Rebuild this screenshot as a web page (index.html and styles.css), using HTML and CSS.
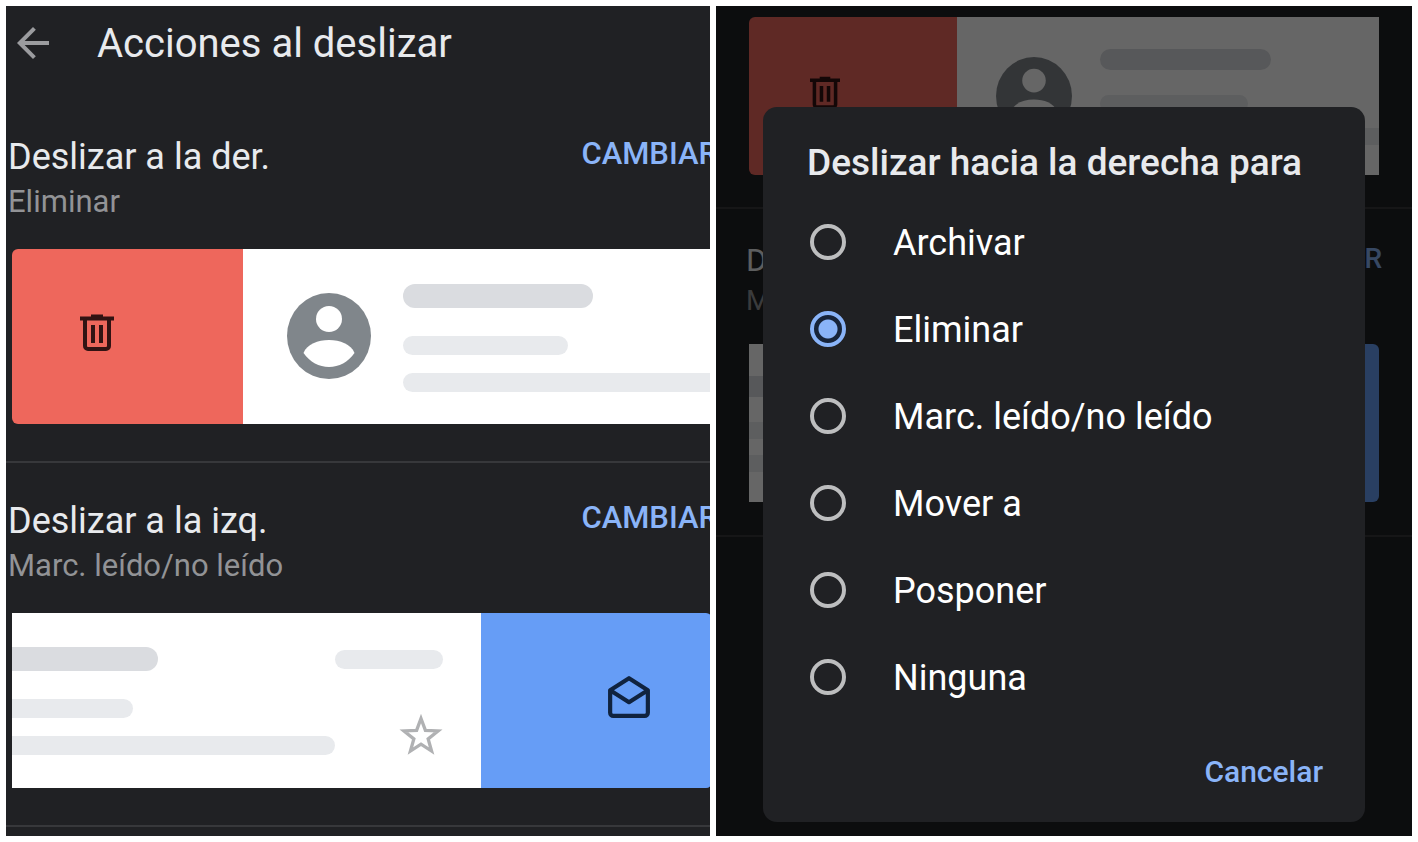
FILE: index.html
```html
<!DOCTYPE html>
<html lang="es">
<head>
<meta charset="UTF-8">
<meta name="viewport" content="width=device-width, initial-scale=1">
<title>Acciones al deslizar</title>
<link rel="stylesheet" href="styles.css">
</head>
<body>

<!-- shared icons -->
<svg class="sprite" aria-hidden="true">
  <symbol id="trash" viewBox="0 0 34 38">
    <path d="M0 4.500h34M11 2.500h12" fill="none" stroke="currentColor" stroke-width="4"/>
    <path d="M5 5v27a3 3 0 0 0 3 3h18a3 3 0 0 0 3-3V5" fill="none" stroke="currentColor" stroke-width="4"/>
    <path d="M13 11v18M21 11v18" fill="none" stroke="currentColor" stroke-width="4"/>
  </symbol>
  <symbol id="avatar" viewBox="0 0 84 86">
    <ellipse cx="42" cy="43" rx="42" ry="43" fill="currentColor"/>
    <circle cx="42" cy="26" r="13" fill="#fff"/>
    <path d="M16.500 60C20 51 31 47 42 47s22 4 25.500 13C61 69 52 74 42 74s-19-5-25.500-14z" fill="#fff"/>
  </symbol>
  <symbol id="mail" viewBox="0 0 42 42">
    <path d="M21 3L3 14.500V36a3 3 0 0 0 3 3h30a3 3 0 0 0 3-3V14.500zM3 14.500L21 26l18-11.500" fill="none" stroke="currentColor" stroke-width="4" stroke-linejoin="round"/>
  </symbol>
</svg>

<div class="screens">

  <main class="screen">
    <header class="topbar">
      <button class="back" type="button" aria-label="Atrás">
        <svg viewBox="0 0 24 24"><path d="M20 11H7.830l5.590-5.590L12 4l-8 8 8 8 1.410-1.410L7.830 13H20z" fill="currentColor"/></svg>
      </button>
      <h1>Acciones al deslizar</h1>
    </header>

    <section class="swipe">
      <div class="swipe-head">
        <div>
          <h2>Deslizar a la der.</h2>
          <p>Eliminar</p>
        </div>
        <button class="change" type="button">CAMBIAR</button>
      </div>
      <div class="card">
        <div class="action delete"><svg><use href="#trash"/></svg></div>
        <div class="mail right">
          <svg class="avatar"><use href="#avatar"/></svg>
          <div class="lines"><i class="line name"></i><i class="line subject"></i><i class="line body"></i></div>
        </div>
      </div>
    </section>

    <section class="swipe">
      <div class="swipe-head">
        <div>
          <h2>Deslizar a la izq.</h2>
          <p>Marc. leído/no leído</p>
        </div>
        <button class="change" type="button">CAMBIAR</button>
      </div>
      <div class="card">
        <div class="mail left">
          <div class="lines"><i class="line name"></i><i class="line subject"></i><i class="line body"></i></div>
          <div class="meta">
            <i class="line date"></i>
            <svg class="star" viewBox="0 0 40 40"><path d="M20 5l4 10.800 11.500.500-9 7.200 3.100 11.100L20 28.300l-9.600 6.300 3.100-11.100-9-7.200 11.500-.500z" fill="none" stroke="currentColor" stroke-width="3"/></svg>
          </div>
        </div>
        <div class="action unread"><svg><use href="#mail"/></svg></div>
      </div>
    </section>
  </main>

  <div class="screen dimmed">
    <div class="behind" aria-hidden="true">
      <section class="swipe first">
        <div class="card">
          <div class="action delete"><svg><use href="#trash"/></svg></div>
          <div class="mail right">
            <svg class="avatar"><use href="#avatar"/></svg>
            <div class="lines"><i class="line name"></i><i class="line subject"></i><i class="line body"></i></div>
          </div>
        </div>
      </section>
      <section class="swipe">
        <div class="swipe-head">
          <div>
            <h2>Deslizar a la izq.</h2>
            <p>Marc. leído/no leído</p>
          </div>
          <button class="change" type="button" tabindex="-1">CAMBIAR</button>
        </div>
        <div class="card">
          <div class="mail left">
            <div class="lines"><i class="line name"></i><i class="line subject"></i><i class="line body"></i></div>
          </div>
          <div class="action unread"></div>
        </div>
      </section>
    </div>

    <div class="scrim">
      <form class="dialog" role="dialog" aria-labelledby="dialog-title">
        <h2 id="dialog-title">Deslizar hacia la derecha para</h2>
        <label class="option"><input type="radio" name="accion" value="archivar">Archivar</label>
        <label class="option"><input type="radio" name="accion" value="eliminar" checked>Eliminar</label>
        <label class="option"><input type="radio" name="accion" value="leido">Marc. leído/no leído</label>
        <label class="option"><input type="radio" name="accion" value="mover">Mover a</label>
        <label class="option"><input type="radio" name="accion" value="posponer">Posponer</label>
        <label class="option"><input type="radio" name="accion" value="ninguna">Ninguna</label>
        <button class="cancel" type="button">Cancelar</button>
      </form>
    </div>
  </div>

</div>
</body>
</html>
```
FILE: styles.css
```css
* {
  box-sizing: border-box;
}
body {
  margin: 0;
  padding: 6px;
  background: #fff;
  font-family: Roboto, "Liberation Sans", sans-serif;
}
h1, h2, p {
  margin: 0;
  font-weight: 400;
  white-space: nowrap;
}
button {
  padding: 0;
  border: 0;
  background: none;
  font-family: inherit;
  cursor: pointer;
}
svg {
  display: block;
  flex: none;
}
.sprite {
  position: absolute;
  width: 0;
  height: 0;
}

.screens {
  display: grid;
  grid-template-columns: 704fr 696fr;
  gap: 6px;
  min-height: calc(100vh - 12px);
}
.screen {
  min-width: 0;
  overflow: hidden;
  background: #202124;
  color: #e8eaed;
}

/* top bar */
.topbar {
  display: flex;
  align-items: center;
  gap: 40px;
  height: 74px;
  padding-left: 3px;
  margin-bottom: 19px;
}
.back {
  color: #9b9c9f;
}
.back svg {
  width: 48px;
  height: 48px;
}
.topbar h1 {
  font-size: 40px;
}

/* swipe settings */
.swipe {
  padding: 34px 0 37px;
  border-bottom: 2px solid #37383b;
}
.swipe-head {
  display: flex;
  justify-content: space-between;
  align-items: flex-start;
  margin: 0 -8px 26px 2px;
}
.swipe-head h2 {
  font-size: 36px;
  line-height: 48px;
}
.swipe-head p {
  font-size: 31px;
  line-height: 42px;
  color: #929396;
}
.change {
  font-size: 31px;
  line-height: 42px;
  font-weight: 500;
  color: #8ab4f8;
}
.card {
  display: flex;
  height: 175px;
  margin: 0 -2px 0 6px;
}
.action {
  width: 33%;
  display: flex;
  align-items: center;
  padding-bottom: 8px;
}
.delete {
  padding-left: 68px;
  border-radius: 6px 0 0 6px;
  background: #ee675c;
  color: #311313;
}
.delete svg {
  width: 34px;
  height: 38px;
}
.unread {
  padding-left: 126px;
  border-radius: 0 6px 6px 0;
  background: #669df6;
  color: #10233f;
}
.unread svg {
  width: 44px;
  height: 44px;
}
.mail {
  flex: 1;
  display: flex;
  background: #fff;
}
.mail.right {
  padding-left: 44px;
  gap: 32px;
}
.avatar {
  width: 84px;
  height: 86px;
  margin-top: 44px;
  color: #80868b;
}

/* placeholder lines */
.lines {
  flex: 1;
  padding-top: 35px;
}
.line {
  display: block;
  height: 19px;
  border-radius: 10px;
  background: #e8eaed;
}
.line.name {
  width: 190px;
  height: 24px;
  border-radius: 12px;
  margin-bottom: 28px;
  background: #dadce0;
}
.line.subject {
  width: 165px;
  margin-bottom: 18px;
}
.right .body {
  border-radius: 10px 0 0 10px;
}
.left .lines {
  padding-top: 34px;
}
.left .line {
  border-radius: 0 12px 12px 0;
}
.left .name {
  width: 146px;
}
.left .subject {
  width: 121px;
}
.left .body {
  width: 323px;
}
.meta {
  display: flex;
  flex-direction: column;
  align-items: flex-end;
  gap: 44px;
  padding: 37px 38px 0 0;
}
.left .date {
  width: 108px;
  border-radius: 10px;
}
.star {
  width: 44px;
  height: 44px;
  color: #b0b1b3;
}

/* second screen, a little smaller and behind the dialog */
.dimmed {
  position: relative;
}
.behind {
  position: absolute;
  inset: 0;
}
.dimmed .swipe {
  padding: 30px 0 33px;
}
.dimmed .first {
  padding: 11px 0 32px;
}
.dimmed .card {
  height: 158px;
  margin: 0 33px;
}
.dimmed .swipe-head {
  margin: 0 30px 24px 30px;
}
.dimmed .swipe-head h2 {
  font-size: 32px;
  line-height: 43px;
}
.dimmed .swipe-head p {
  font-size: 28px;
  line-height: 38px;
}
.dimmed .change {
  font-size: 28px;
  line-height: 40px;
}
.dimmed .delete {
  padding: 0 0 6px 61px;
}
.dimmed .delete svg {
  width: 30px;
  height: 34px;
}
.dimmed .right {
  padding-left: 39px;
  gap: 28px;
}
.dimmed .avatar {
  width: 76px;
  height: 78px;
  margin-top: 40px;
}
.dimmed .lines {
  padding-top: 32px;
}
.dimmed .line {
  height: 17px;
}
.dimmed .name {
  height: 21px;
  margin-bottom: 25px;
}
.dimmed .subject {
  margin-bottom: 16px;
}
.dimmed .right .name {
  width: 171px;
}
.dimmed .right .subject {
  width: 148px;
}

/* dialog */
.scrim {
  position: relative;
  min-height: 100%;
  padding: 101px 47px 14px;
  background: rgba(0,0,0,0.6);
}
.dialog {
  display: flex;
  flex-direction: column;
  padding: 30px 42px 32px 44px;
  border-radius: 14px;
  background: #202124;
}
.dialog h2 {
  margin-bottom: 10px;
  font-size: 37px;
  line-height: 52px;
  font-weight: 500;
}
.option {
  display: flex;
  align-items: center;
  gap: 47px;
  height: 87px;
  font-size: 36px;
  color: #fff;
  cursor: pointer;
}
.option input {
  appearance: none;
  width: 36px;
  height: 36px;
  margin: 0 0 2px 3px;
  border: 4px solid #bdbebf;
  border-radius: 50%;
}
.option input:checked {
  border-color: #8ab4f8;
  background: radial-gradient(circle, #8ab4f8 9px, #17243a 10px);
}
.cancel {
  align-self: flex-end;
  margin-top: 33px;
  font-size: 30px;
  line-height: 36px;
  font-weight: 500;
  color: #8ab4f8;
}
```
